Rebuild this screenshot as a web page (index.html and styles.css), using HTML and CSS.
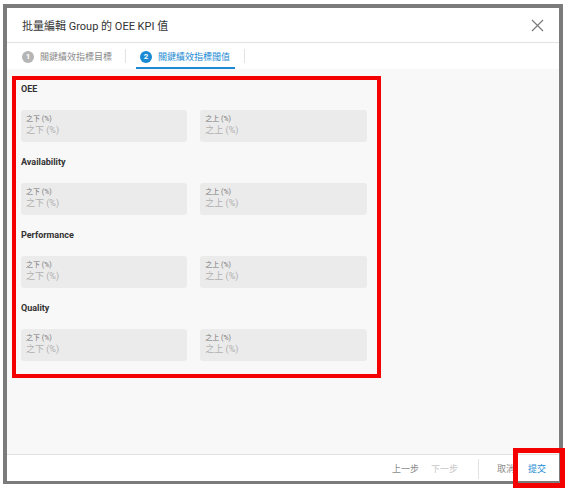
FILE: index.html
```html
<!DOCTYPE html>
<html lang="zh-Hant">
<head>
<meta charset="utf-8">
<link rel="stylesheet" href="styles.css">
</head>
<body>
<div class="frame">
  <div class="dialog">
    <div class="header">
      <span class="title">批量編輯 Group 的 OEE KPI 值</span>
      <svg class="close" width="13" height="13" viewBox="0 0 13 13"><path d="M1 1L12 12M12 1L1 12" stroke="#7a7a7a" stroke-width="1.2" fill="none"/></svg>
    </div>
    <div class="tabs">
      <div class="tab">
        <span class="num">1</span><span class="tab-text">關鍵績效指標目標</span>
      </div>
      <span class="tab-sep"></span>
      <div class="tab active">
        <span class="num">2</span><span class="tab-text">關鍵績效指標閾值</span>
      </div>
      <span class="tab-sep last"></span>
    </div>
    <div class="content">
      <div class="section">
        <div class="sec-label">OEE</div>
        <div class="grid">
          <div class="field"><div class="f-label">之下 (%)</div><div class="f-ph">之下 (%)</div></div>
          <div class="field"><div class="f-label">之上 (%)</div><div class="f-ph">之上 (%)</div></div>
        </div>
      </div>
      <div class="section">
        <div class="sec-label">Availability</div>
        <div class="grid">
          <div class="field"><div class="f-label">之下 (%)</div><div class="f-ph">之下 (%)</div></div>
          <div class="field"><div class="f-label">之上 (%)</div><div class="f-ph">之上 (%)</div></div>
        </div>
      </div>
      <div class="section">
        <div class="sec-label">Performance</div>
        <div class="grid">
          <div class="field"><div class="f-label">之下 (%)</div><div class="f-ph">之下 (%)</div></div>
          <div class="field"><div class="f-label">之上 (%)</div><div class="f-ph">之上 (%)</div></div>
        </div>
      </div>
      <div class="section">
        <div class="sec-label">Quality</div>
        <div class="grid">
          <div class="field"><div class="f-label">之下 (%)</div><div class="f-ph">之下 (%)</div></div>
          <div class="field"><div class="f-label">之上 (%)</div><div class="f-ph">之上 (%)</div></div>
        </div>
      </div>
    </div>
    <div class="footer">
      <span class="btn">上一步</span>
      <span class="btn disabled">下一步</span>
      <span class="foot-sep"></span>
      <span class="btn cancel">取消</span>
      <span class="btn primary">提交</span>
    </div>
  </div>
</div>
<div class="mark mark-form"></div>
<div class="mark mark-submit"></div>
</body>
</html>
```
FILE: styles.css
```css
html, body {
  margin: 0;
  padding: 0;
  background: #ffffff;
  font-family: Roboto, "Noto Sans CJK TC", sans-serif;
}
body {
  width: 568px;
  height: 491px;
  position: relative;
  overflow: hidden;
}
.frame {
  margin: 4px 0 0 3px;
  width: 552px;
  height: 473px;
  border: 4px solid #7b7b7b;
  border-bottom-width: 3px;
  background: #fff;
}
.dialog {
  height: 100%;
  display: flex;
  flex-direction: column;
}
.header {
  height: 34px;
  flex: none;
  display: flex;
  align-items: center;
  justify-content: space-between;
  padding: 0 15px 0 15px;
  border-bottom: 1px solid #e2e2e2;
}
.title {
  font-size: 11px;
  color: #333;
}
.close {
  display: block;
}
.tabs {
  height: 26px;
  flex: none;
  display: flex;
  align-items: center;
  padding-left: 15px;
  background: #fff;
}
.tab {
  display: flex;
  align-items: center;
  height: 100%;
  gap: 6px;
  font-size: 9px;
  color: #8a8a8a;
  box-sizing: border-box;
  padding-top: 1px;
}
.tab.active {
  color: #1b8ad3;
  border-bottom: 2px solid #1b8ad3;
  padding: 3px 5px 0 4px;
}
.num {
  width: 12px;
  height: 12px;
  border-radius: 50%;
  background: #b5b5b5;
  color: #fff;
  font-size: 8px;
  font-weight: 700;
  display: flex;
  align-items: center;
  justify-content: center;
}
.active .num {
  background: #1b8ad3;
}
.tab-sep {
  width: 1px;
  height: 14px;
  background: #e2e2e2;
  margin: 0 10px 0 13px;
}
.tab-sep.last {
  margin-left: 9px;
}
.content {
  flex: 1;
  background: #f8f8f8;
  padding: 14px 13px 0 14px;
}
.section {
  margin-bottom: 14px;
}
.sec-label {
  font-size: 9px;
  font-weight: 700;
  color: #333;
  line-height: 12px;
  margin-bottom: 15px;
}
.grid {
  display: grid;
  grid-template-columns: repeat(3, 1fr);
  column-gap: 13px;
}
.field {
  height: 32px;
  box-sizing: border-box;
  background: #ebebeb;
  border-radius: 3px;
  padding: 5px 5px 0 5px;
}
.f-label {
  font-size: 7px;
  line-height: 9px;
  color: #777;
}
.f-ph {
  font-size: 9px;
  line-height: 12px;
  color: #b0b0b0;
}
.footer {
  height: 27px;
  flex: none;
  border-top: 1px solid #e2e2e2;
  display: flex;
  align-items: center;
  justify-content: flex-end;
  padding-right: 13px;
  font-size: 9px;
  padding-top: 1px;
  box-sizing: border-box;
}
.btn {
  color: #8a8a8a;
  margin-left: 12px;
}
.btn.disabled {
  color: #c8c8c8;
}
.btn.cancel {
  margin-left: 18px;
}
.btn.primary {
  color: #1b8ad3;
  margin-left: 13px;
}
.foot-sep {
  width: 1px;
  height: 20px;
  background: #e2e2e2;
  margin-left: 20px;
}
.mark {
  position: absolute;
  box-sizing: border-box;
  border: 4px solid #f50000;
}
.mark-form {
  left: 12px;
  top: 76px;
  width: 369px;
  height: 302px;
}
.mark-submit {
  left: 513px;
  top: 448px;
  width: 52px;
  height: 40px;
  border-width: 5px;
}
```
